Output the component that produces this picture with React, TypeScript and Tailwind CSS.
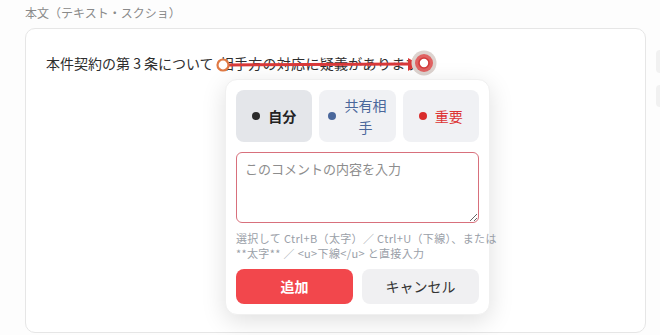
const JP = 'font-["Noto_Sans_CJK_JP","Noto_Sans",sans-serif]';

function ArrowMark() {
  return (
    <svg
      className="pointer-events-none absolute left-0 top-0"
      width="660"
      height="110"
      viewBox="0 0 660 110"
    >
      {/* offsets relative to the card (card at 25,28) */}
      <line x1="203" y1="36" x2="384" y2="35" stroke="#d93a3a" strokeWidth="3" />
      <polygon points="382,29 393,35 382,42" fill="#d93a3a" />
      <circle cx="197" cy="36" r="5.5" fill="#fff" stroke="#e07a45" strokeWidth="2.2" />
      <circle cx="398" cy="34" r="12.5" fill="#ddd3cf" />
      <circle cx="398" cy="34" r="9" fill="#e06262" />
      <circle cx="398" cy="34" r="5" fill="#fff" stroke="#d23a3a" strokeWidth="1.6" />
    </svg>
  );
}

function TagButton({
  dot,
  label,
  active,
  textClass,
}: {
  dot: string;
  label: React.ReactNode;
  active?: boolean;
  textClass: string;
}) {
  return (
    <button
      className={`flex h-[52px] items-center justify-center gap-2 rounded-lg px-2 text-[14px] leading-[22px] ${
        active ? 'bg-[#e4e6ea]' : 'bg-[#f0f1f4]'
      } ${textClass}`}
    >
      <span className={`h-[8px] w-[8px] shrink-0 rounded-full ${dot}`} />
      <span className="text-center">{label}</span>
    </button>
  );
}

function CommentPopup() {
  return (
    <div className="absolute left-[199px] top-[50px] w-[265px] rounded-xl border border-[#f0f0f0] bg-white p-[10px] shadow-[0_6px_24px_rgba(0,0,0,0.13)]">
      <div className="grid grid-cols-3 gap-[7px]">
        <TagButton dot="bg-[#2b2b2b]" label="自分" active textClass="font-bold text-[#222]" />
        <TagButton
          dot="bg-[#4a679b]"
          label={
            <>
              共有相
              <br />手
            </>
          }
          textClass="text-[#4a679b]"
        />
        <TagButton dot="bg-[#d92c2c]" label="重要" textClass="text-[#d33]" />
      </div>
      <textarea
        className="mt-[10px] block h-[71px] w-full resize-y rounded-md border border-[#d8707c] px-2 py-[6px] text-[13px] leading-5 text-[#333] outline-none placeholder:text-[#8d8d8d]"
        placeholder="このコメントの内容を入力"
        autoFocus
      />
      <p className="mt-[8px] whitespace-nowrap text-[11px] leading-[15px] tracking-[0.35px] text-[#9aa0a8]">
        選択して Ctrl+B（太字）／ Ctrl+U（下線）、または
        <br />
        **太字** ／ &lt;u&gt;下線&lt;/u&gt; と直接入力
      </p>
      <div className="mt-[8px] grid grid-cols-2 gap-[9px]">
        <button className="h-[35px] rounded-lg bg-[#f2474c] text-[14px] font-bold text-white">
          追加
        </button>
        <button className="h-[35px] rounded-lg bg-[#f0f0f2] text-[14px] text-[#333]">
          キャンセル
        </button>
      </div>
    </div>
  );
}

export default function App() {
  return (
    <div className={`flex h-[335px] w-[660px] overflow-hidden bg-[#fdfdfd] ${JP}`}>
      <div className="ml-[25px] flex w-[623px] flex-col">
        <div className="pt-[4px] text-[12px] leading-[18px] text-[#8a8a8a]">本文（テキスト・スクショ）</div>
        <div className="relative mt-[6px] h-[305px] rounded-[10px] border border-[#e6e6e6] bg-white px-[20px] pt-[23px]">
          <p className="text-[14px] leading-[22px] text-[#2e2e2e]">
            本件契約の第 3 条について
            <span className="ml-[6px] tracking-[0.3px]">相手方の対応に疑義があります</span>
          </p>
          <ArrowMark />
          <CommentPopup />
        </div>
      </div>
      <div className="ml-[10px] mt-[50px] flex flex-col gap-[12px]">
        <div className="h-[23px] w-[4px] rounded-l bg-[#f1f1f1]" />
        <div className="h-[22px] w-[4px] rounded-l bg-[#f1f1f1]" />
      </div>
    </div>
  );
}
